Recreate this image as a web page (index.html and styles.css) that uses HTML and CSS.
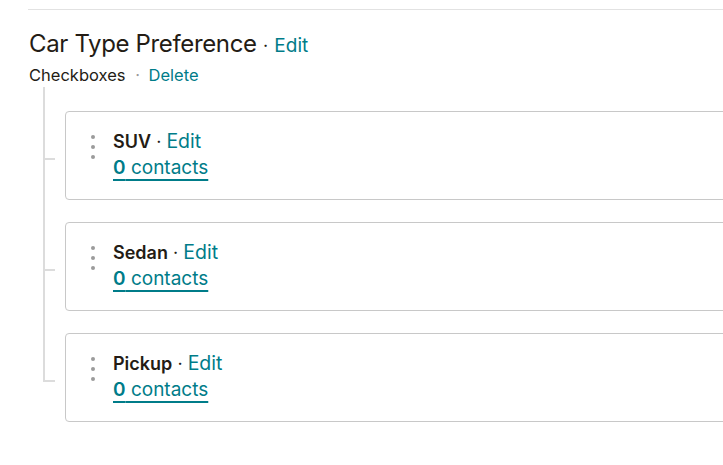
FILE: index.html
```html
<!DOCTYPE html>
<html lang="en">
<head>
    <meta charset="UTF-8">
    <meta name="viewport" content="width=device-width, initial-scale=1.0">
    <title>Car Type Preference</title>
    <link rel="stylesheet" href="styles.css">
</head>
<body>
    <div class="field-group">
        <div class="field-header">
            <h2 class="field-title">Car Type Preference <span class="sep">&middot;</span> <a href="#" class="link">Edit</a></h2>
            <p class="field-meta">Checkboxes <span class="dot">&middot;</span> <a href="#" class="link">Delete</a></p>
        </div>

        <ul class="tree">
            <li class="option">
                <span class="handle"><i></i><i></i><i></i></span>
                <div class="option-body">
                    <div class="option-name"><strong>SUV</strong> <span class="sep">&middot;</span> <a href="#" class="link">Edit</a></div>
                    <a href="#" class="count"><b>0</b> contacts</a>
                </div>
            </li>
            <li class="option">
                <span class="handle"><i></i><i></i><i></i></span>
                <div class="option-body">
                    <div class="option-name"><strong>Sedan</strong> <span class="sep">&middot;</span> <a href="#" class="link">Edit</a></div>
                    <a href="#" class="count"><b>0</b> contacts</a>
                </div>
            </li>
            <li class="option">
                <span class="handle"><i></i><i></i><i></i></span>
                <div class="option-body">
                    <div class="option-name"><strong>Pickup</strong> <span class="sep">&middot;</span> <a href="#" class="link">Edit</a></div>
                    <a href="#" class="count"><b>0</b> contacts</a>
                </div>
            </li>
        </ul>
    </div>
</body>
</html>
```

FILE: styles.css
```css
body {
    margin: 0;
    font-family: Inter, "Liberation Sans", sans-serif;
    color: #241c15;
    background-color: #fff;
    overflow: hidden;
}
.field-group {
    margin: 9px 0 0 28px;
    padding-left: 1px;
    border-top: 1px solid #e2e2e2;
    width: 900px;
}
.field-header {
    padding-top: 17px;
}
.field-title {
    margin: 0;
    font-size: 24px;
    font-weight: 400;
    letter-spacing: -0.35px;
    line-height: 34px;
}
.field-title .sep {
    font-size: 18px;
}
.field-title .link {
    font-size: 19px;
    letter-spacing: 0;
}
.link {
    color: #007c89;
    text-decoration: none;
}
.field-meta {
    margin: 0;
    font-size: 16.5px;
    line-height: 24px;
}
.field-meta .dot {
    color: #999;
    margin: 0 4px 0 5px;
}
.tree {
    list-style: none;
    margin: 0 0 0 14px;
    padding: 24px 0 0 22px;
    position: relative;
}
.tree::before {
    content: "";
    position: absolute;
    left: 0;
    top: 0;
    bottom: 40px;
    width: 2px;
    background-color: #dcdcdc;
}
.option {
    position: relative;
    display: flex;
    height: 89px;
    margin-bottom: 22px;
    padding: 17px 0 0 25px;
    box-sizing: border-box;
    border: 1px solid #c8c8c8;
    border-radius: 4px;
    gap: 18px;
}
.option::before {
    content: "";
    position: absolute;
    left: -22px;
    top: 46px;
    width: 11px;
    height: 2px;
    background-color: #dcdcdc;
}
.handle {
    display: flex;
    flex-direction: column;
    gap: 6px;
    padding-top: 6px;
}
.handle i {
    width: 4px;
    height: 4px;
    border-radius: 50%;
    background-color: #9b9b9b;
}
.option-body {
    display: flex;
    flex-direction: column;
    align-items: flex-start;
}
.option-name {
    font-size: 18px;
    line-height: 24px;
}
.option-name strong {
    font-weight: 600;
}
.option-name .link {
    font-size: 19.5px;
}
.count {
    font-size: 19px;
    line-height: 28px;
    color: #007c89;
    text-decoration: underline;
    text-decoration-thickness: 2px;
    text-underline-offset: 5px;
}
.count b {
    font-weight: 600;
}
```
